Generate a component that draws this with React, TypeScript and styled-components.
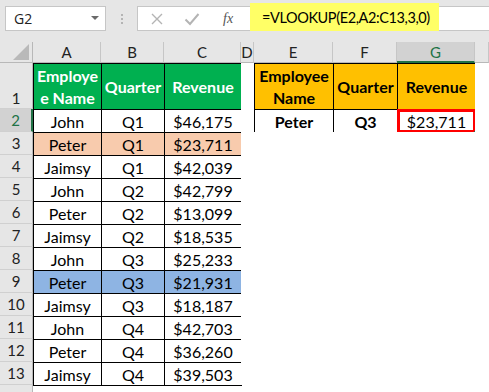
import { createGlobalStyle, styled } from "styled-components";

type Row = {
  name: string;
  quarter: string;
  revenue: string;
  fill?: string;
};

const rows: Row[] = [
  { name: "John", quarter: "Q1", revenue: "$46,175" },
  { name: "Peter", quarter: "Q1", revenue: "$23,711", fill: "#f8cbad" },
  { name: "Jaimsy", quarter: "Q1", revenue: "$42,039" },
  { name: "John", quarter: "Q2", revenue: "$42,799" },
  { name: "Peter", quarter: "Q2", revenue: "$13,099" },
  { name: "Jaimsy", quarter: "Q2", revenue: "$18,535" },
  { name: "John", quarter: "Q3", revenue: "$25,233" },
  { name: "Peter", quarter: "Q3", revenue: "$21,931", fill: "#8eb4e3" },
  { name: "Jaimsy", quarter: "Q3", revenue: "$18,187" },
  { name: "John", quarter: "Q4", revenue: "$42,703" },
  { name: "Peter", quarter: "Q4", revenue: "$36,260" },
  { name: "Jaimsy", quarter: "Q4", revenue: "$39,503" },
];

const columns = ["A", "B", "C", "D", "E", "F", "G", ""];

const App = (): JSX.Element => {
  return (
    <Window>
      <GlobalStyle />
      <FormulaBar>
        <NameBox>
          <span>G2</span>
          <Caret />
        </NameBox>
        <Dots>
          <i />
          <i />
          <i />
        </Dots>
        <FormulaBox>
          <BarIcon>
            <svg width="14" height="14" viewBox="0 0 14 14">
              <path d="M2 2 L12 12 M12 2 L2 12" stroke="#b4b4b4" strokeWidth="1.4" fill="none" />
            </svg>
          </BarIcon>
          <BarIcon>
            <svg width="16" height="14" viewBox="0 0 16 14">
              <path d="M1.5 7.5 L6 12 L14.5 2" stroke="#b4b4b4" strokeWidth="2" fill="none" />
            </svg>
          </BarIcon>
          <Fx>fx</Fx>
          <Formula>=VLOOKUP(E2,A2:C13,3,0)</Formula>
        </FormulaBox>
      </FormulaBar>

      <Sheet>
        <Corner>
          <svg width="16" height="16" viewBox="0 0 16 16">
            <path d="M16 0 L16 16 L0 16 Z" fill="#b9b9b9" />
          </svg>
        </Corner>
        {columns.map((c, i) => (
          <ColHead key={i} $active={c === "G"}>
            {c}
          </ColHead>
        ))}

        <RowHead $bottom>1</RowHead>
        <Cell $border $fill="#00b050" $color="#ffffff" $bold $wrap>
          Employe
          <br />e Name
        </Cell>
        <Cell $border $fill="#00b050" $color="#ffffff" $bold>
          Quarter
        </Cell>
        <Cell $border $fill="#00b050" $color="#ffffff" $bold>
          Revenue
        </Cell>
        <Cell />
        <Cell $border $fill="#ffc000" $bold $wrap>
          Employee
          <br />
          Name
        </Cell>
        <Cell $border $fill="#ffc000" $bold>
          Quarter
        </Cell>
        <Cell $border $fill="#ffc000" $bold>
          Revenue
        </Cell>
        <Cell />

        {rows.map((r, i) => (
          <Line key={i} row={r} index={i + 2} />
        ))}

        {/* row 14 runs off the bottom of the window */}
        <RowHead />
      </Sheet>
    </Window>
  );
};

const Line = ({ row, index }: { row: Row; index: number }): JSX.Element => {
  const lookup = index === 2;
  return (
    <>
      <RowHead $active={lookup}>{index}</RowHead>
      <Cell $border $fill={row.fill}>
        {row.name}
      </Cell>
      <Cell $border $fill={row.fill}>
        {row.quarter}
      </Cell>
      <Cell $border $fill={row.fill}>
        {row.revenue}
      </Cell>
      <Cell />
      {lookup ? (
        <>
          <Cell $border $bold>
            Peter
          </Cell>
          <Cell $border $bold>
            Q3
          </Cell>
          <Cell $border $selected>
            $23,711
          </Cell>
        </>
      ) : (
        <>
          <Cell />
          <Cell />
          <Cell />
        </>
      )}
      <Cell />
    </>
  );
};

export default App;

const GlobalStyle = createGlobalStyle`
  body {
    margin: 0;
    background: #ffffff;
    font-family: Lato, "Liberation Sans", sans-serif;
  }
`;

const Window = styled.div`
  width: 489px;
  height: 392px;
  overflow: hidden;
  display: flex;
  flex-direction: column;
`;

const FormulaBar = styled.div`
  height: 42px;
  flex-shrink: 0;
  background: #e6e6e6;
  display: flex;
  align-items: flex-start;
  padding: 6px 0 0 5px;
  box-sizing: border-box;
`;

const NameBox = styled.div`
  width: 101px;
  height: 25px;
  box-sizing: border-box;
  background: #ffffff;
  border: 1px solid #c6c6c6;
  display: flex;
  align-items: center;
  justify-content: space-between;
  padding: 0 6px 0 8px;
  font-family: "Open Sans", sans-serif;
  font-size: 14px;
  color: #222222;
`;

const Caret = styled.span`
  width: 0;
  height: 0;
  border-left: 4px solid transparent;
  border-right: 4px solid transparent;
  border-top: 4px solid #6a6a6a;
  margin-top: -2px;
`;

const Dots = styled.div`
  width: 31px;
  height: 25px;
  display: flex;
  flex-direction: column;
  align-items: center;
  justify-content: center;
  gap: 2px;

  i {
    width: 2px;
    height: 2px;
    background: #b4b4b4;
  }
`;

const FormulaBox = styled.div`
  flex: 1;
  height: 25px;
  box-sizing: border-box;
  background: #ffffff;
  border: 1px solid #c6c6c6;
  border-right: none;
  display: flex;
  align-items: center;
  padding-left: 12px;
`;

const BarIcon = styled.span`
  width: 34px;
  display: flex;
  align-items: center;
`;

const Fx = styled.span`
  width: 27px;
  padding-left: 5px;
  font-family: "Liberation Serif", serif;
  font-style: italic;
  font-size: 14px;
  color: #555555;
`;

const Formula = styled.span`
  align-self: flex-start;
  height: 28px;
  margin-top: -4px;
  width: 189px;
  box-sizing: border-box;
  background: #ffff66;
  padding: 6px 0 0 12px;
  font-family: Lato, sans-serif;
  font-size: 14.5px;
  letter-spacing: -0.4px;
  color: #000000;
  white-space: nowrap;
`;

const Sheet = styled.div`
  flex: 1;
  overflow: hidden;
  display: grid;
  grid-template-columns: 33px 68px 63px 77px 13px 79px 64px 78px 1fr;
  grid-template-rows: 21px 46px repeat(12, 23px) 23px;
  font-size: 16px;
  color: #000000;
`;

const Corner = styled.div`
  background: #e6e6e6;
  border-right: 1px solid #b8b8b8;
  border-bottom: 1px solid #b8b8b8;
  display: flex;
  align-items: flex-end;
  justify-content: flex-end;
  padding: 0 3px 2px 0;
`;

const ColHead = styled.div<{ $active?: boolean }>`
  background: ${(p) => (p.$active ? "#d2d2d2" : "#e6e6e6")};
  color: ${(p) => (p.$active ? "#217346" : "#222222")};
  border-right: 1px solid #c6c6c6;
  border-bottom: ${(p) => (p.$active ? "2px solid #217346" : "1px solid #b8b8b8")};
  display: flex;
  align-items: center;
  justify-content: center;
  font-size: 15px;
`;

const RowHead = styled.div<{ $active?: boolean; $bottom?: boolean }>`
  background: ${(p) => (p.$active ? "#d2d2d2" : "#e6e6e6")};
  color: ${(p) => (p.$active ? "#217346" : "#222222")};
  border-right: ${(p) => (p.$active ? "2px solid #217346" : "1px solid #b8b8b8")};
  border-bottom: 1px solid #d0d0d0;
  display: flex;
  align-items: ${(p) => (p.$bottom ? "flex-end" : "center")};
  justify-content: center;
  padding-bottom: ${(p) => (p.$bottom ? "1px" : "0")};
  font-size: 15px;
`;

const Cell = styled.div<{
  $border?: boolean;
  $fill?: string;
  $color?: string;
  $bold?: boolean;
  $wrap?: boolean;
  $selected?: boolean;
}>`
  position: relative;
  background: ${(p) => p.$fill ?? "#ffffff"};
  color: ${(p) => p.$color ?? "#000000"};
  font-weight: ${(p) => (p.$bold ? 700 : 400)};
  line-height: ${(p) => (p.$wrap ? "22px" : "normal")};
  display: flex;
  align-items: center;
  justify-content: center;
  text-align: center;
  white-space: nowrap;
  ${(p) =>
    p.$border &&
    `
    border: 1px solid #000000;
    margin: 0 -1px -1px 0;
  `}
  ${(p) =>
    p.$selected &&
    `
    box-shadow: inset 0 0 0 2px #ff0000;
    border-color: #ff0000;
    &::after {
      content: "";
      position: absolute;
      right: -3px;
      bottom: -3px;
      width: 4px;
      height: 4px;
      background: #217346;
    }
  `}
`;
